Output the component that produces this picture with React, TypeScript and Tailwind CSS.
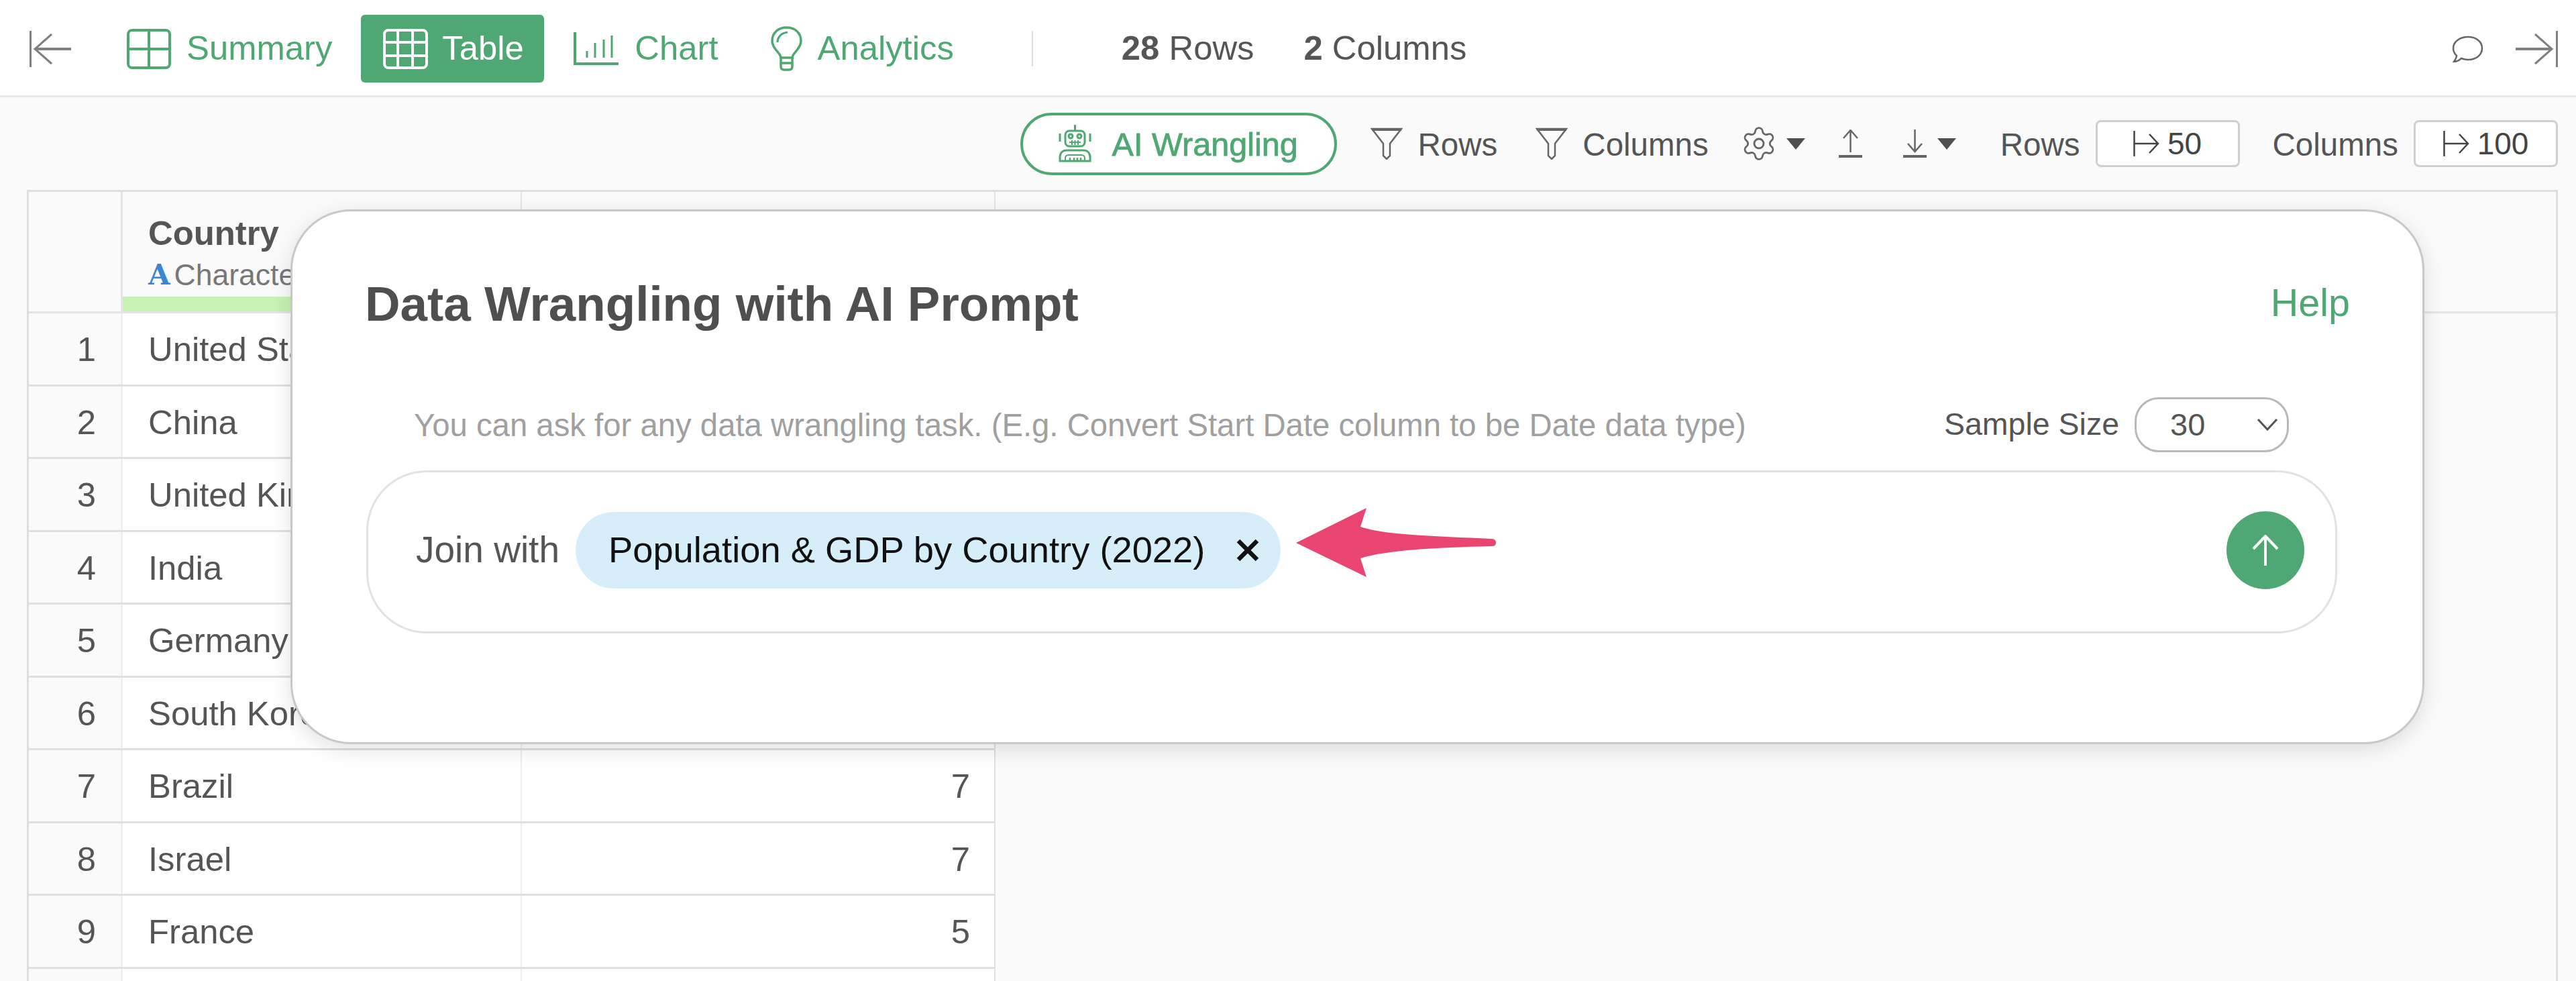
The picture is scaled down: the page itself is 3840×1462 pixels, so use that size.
import { Settings } from "lucide-react";

const ROWS: [string, string][] = [
  ["United States", ""],
  ["China", ""],
  ["United Kingdom", ""],
  ["India", ""],
  ["Germany", ""],
  ["South Korea", ""],
  ["Brazil", "7"],
  ["Israel", "7"],
  ["France", "5"],
  ["", ""],
];

function BackIcon() {
  return (
    <svg width="62" height="54" viewBox="0 0 62 54" fill="none" stroke="#808080">
      <path d="M1.5 0V54" strokeWidth="3" />
      <path d="M62 27H9" strokeWidth="4" />
      <path d="M33 5L8 27L33 49" strokeWidth="3" />
    </svg>
  );
}

function ForwardIcon() {
  return (
    <svg width="63" height="54" viewBox="0 0 63 54" fill="none" stroke="#808080">
      <path d="M61.5 0V54" strokeWidth="3" />
      <path d="M0 27H53" strokeWidth="4" />
      <path d="M29 5L54 27L29 49" strokeWidth="3" />
    </svg>
  );
}

function SummaryIcon() {
  return (
    <svg width="66" height="60" viewBox="0 0 66 60" fill="none" stroke="#4fa873" strokeWidth="4">
      <rect x="2" y="2" width="62" height="56" rx="6" />
      <path d="M33 2V58M2 30H64" />
    </svg>
  );
}

function TableIcon() {
  return (
    <svg width="67" height="60" viewBox="0 0 67 60" fill="none" stroke="#fff" strokeWidth="4">
      <rect x="2" y="2" width="63" height="56" rx="6" />
      <path d="M22 2V58M44 2V58M2 20H65M2 40H65" />
    </svg>
  );
}

function ChartIcon() {
  return (
    <svg width="67" height="50" viewBox="0 0 67 50" fill="none" stroke="#4fa873" strokeWidth="3">
      <path d="M2 0V47H67" strokeWidth="4" />
      <path d="M20 28V38M32 16V38M45 11V38M57 5V38" />
    </svg>
  );
}

function BulbIcon() {
  return (
    <svg width="47" height="67" viewBox="0 0 47 67" fill="none" stroke="#4fa873" strokeWidth="3.5">
      <path d="M15 47C15 40 2 34 2 22C2 10 11 2 23.5 2C36 2 45 10 45 22C45 34 32 40 32 47Z" />
      <path d="M10 24C10 16 16 10 25 9" strokeWidth="3" />
      <path d="M15 47V60Q15 65 20 65H27Q32 65 32 60V47M15 55H32" />
    </svg>
  );
}

function RobotIcon() {
  return (
    <svg width="49" height="56" viewBox="0 0 49 56" fill="none" stroke="#4fa873" strokeWidth="3">
      <path d="M24.5 0V9" />
      <rect x="10" y="9" width="29" height="23" rx="6" />
      <circle cx="18" cy="17" r="3" />
      <circle cx="31" cy="17" r="3" />
      <path d="M16 26H33M20 23V30M24.5 23V30M29 23V30" strokeWidth="2" />
      <path d="M2 13V25M47 13V25" />
      <path d="M2 54V48C2 42 6 38 12 38H37C43 38 47 42 47 48V54Z" />
      <path d="M10 54V50C10 47 12 45 15 45H34C37 45 39 47 39 50V54" strokeWidth="2" />
      <path d="M17 49V53M23 49V53M28 49V53M33 49V53" strokeWidth="2.5" />
    </svg>
  );
}

function FunnelIcon() {
  return (
    <svg width="48" height="48" viewBox="0 0 48 48" fill="none" stroke="#666" strokeWidth="2.5">
      <path d="M2 2H46L29 24V42L24 47L19 42V24Z" />
      <path d="M2 3H46" strokeWidth="4" />
    </svg>
  );
}

function Caret() {
  return (
    <svg width="28" height="17" viewBox="0 0 28 17" fill="#4f4f4f">
      <path d="M0 0H28L14 17Z" />
    </svg>
  );
}

function UploadIcon() {
  return (
    <svg width="35" height="42" viewBox="0 0 35 42" fill="none" stroke="#666" strokeWidth="2.5">
      <path d="M17.5 1V34M7 13L17.5 1L28 13" />
      <path d="M0 40H35" strokeWidth="4" />
    </svg>
  );
}

function DownloadIcon() {
  return (
    <svg width="35" height="42" viewBox="0 0 35 42" fill="none" stroke="#666" strokeWidth="2.5">
      <path d="M17.5 0V33M7 21L17.5 33L28 21" />
      <path d="M0 40H35" strokeWidth="4" />
    </svg>
  );
}

function ChatIcon() {
  return (
    <svg width="47" height="40" viewBox="0 0 47 40" fill="none" stroke="#666" strokeWidth="2.5">
      <path d="M24 2C36 2 45 9 45 19C45 29 36 36 24 36C20 36 17 35 14 34C11 37 7 39 3 39C5 36 7 33 7 30C4 27 2 23 2 19C2 9 12 2 24 2Z" />
    </svg>
  );
}

function LimitArrow() {
  return (
    <svg width="39" height="38" viewBox="0 0 39 38" fill="none" stroke="#444" strokeWidth="2.5">
      <path d="M1.5 0V38M2 19H37M24 5L37 19L24 33" />
    </svg>
  );
}

function LimitBox({ value }: { value: string }) {
  return (
    <div className="flex h-[70px] w-[215px] items-center justify-center gap-[12px] rounded-[8px] border-[3px] border-[#cfcfcf] bg-white text-[46px] text-[#444]">
      <LimitArrow />
      <span>{value}</span>
    </div>
  );
}

export default function App() {
  return (
    <div className="relative h-[1462px] w-[3840px] overflow-hidden bg-[#fafafa] font-['Liberation_Sans',Arial,sans-serif] text-[#555]">
      {/* Top bar */}
      <div className="flex h-[145px] items-center border-b-[3px] border-[#e8e8e8] bg-white pl-[44px] pr-[27px] pt-[3px] text-[50.8px] text-[#4fa873]">
        <BackIcon />
        <div className="ml-[83px] flex items-center gap-[23px]">
          <SummaryIcon />
          <span>Summary</span>
        </div>
        <div className="ml-[43px] flex h-[101px] w-[273px] items-center gap-[21px] rounded-[6px] bg-[#4fa873] pl-[33px] text-white">
          <TableIcon />
          <span>Table</span>
        </div>
        <div className="ml-[44px] flex items-center gap-[24px]">
          <ChartIcon />
          <span>Chart</span>
        </div>
        <div className="ml-[78px] flex items-center gap-[23px]">
          <BulbIcon />
          <span>Analytics</span>
        </div>
        <div className="ml-[116px] h-[53px] w-[2px] bg-[#ddd]" />
        <div className="ml-[132px] text-[#555]">
          <span className="font-bold">28</span> Rows
        </div>
        <div className="ml-[74px] text-[#555]">
          <span className="font-bold">2</span> Columns
        </div>
        <div className="ml-auto">
          <ChatIcon />
        </div>
        <div className="ml-[48px]">
          <ForwardIcon />
        </div>
      </div>

      {/* Toolbar */}
      <div className="flex h-[138px] items-center justify-end pr-[27px] text-[47.5px]">
        <div className="flex h-[93px] w-[472px] items-center gap-[31px] rounded-full border-[4px] border-[#4fa873] bg-white pl-[53px] text-[48.6px] text-[#4fa873] [-webkit-text-stroke:0.8px_#4fa873]">
          <RobotIcon />
          <span className="pt-[3px]">AI Wrangling</span>
        </div>
        <div className="ml-[50px]">
          <FunnelIcon />
        </div>
        <span className="ml-[23px] pt-[4px]">Rows</span>
        <div className="ml-[57px]">
          <FunnelIcon />
        </div>
        <span className="ml-[22px] pt-[4px]">Columns</span>
        <Settings className="ml-[47px] text-[#666]" size={56} strokeWidth={1.2} />
        <div className="ml-[13px]">
          <Caret />
        </div>
        <div className="ml-[50px]">
          <UploadIcon />
        </div>
        <div className="ml-[61px]">
          <DownloadIcon />
        </div>
        <div className="ml-[16px]">
          <Caret />
        </div>
        <span className="ml-[66px] pt-[4px]">Rows</span>
        <div className="ml-[23px]">
          <LimitBox value="50" />
        </div>
        <span className="ml-[49px] pt-[4px]">Columns</span>
        <div className="ml-[23px]">
          <LimitBox value="100" />
        </div>
      </div>

      {/* Table */}
      <div className="ml-[40px] h-[1179px] w-[3773px] border-x-[3px] border-t-[3px] border-[#dedede] text-[50.8px]">
        <div className="flex h-[181px] border-b-[3px] border-[#e4e4e4]">
          <div className="w-[140px] border-r-[3px] border-[#e4e4e4]" />
          <div className="flex w-[595px] flex-col border-r-[2px] border-[#e4e4e4]">
            <div className="pl-[38px] pt-[34px] font-bold leading-[56px]">Country</div>
            <div className="mt-[10px] flex items-center gap-[6px] pl-[38px] text-[44.5px] leading-[48px] text-[#777]">
              <span className="font-['DejaVu_Serif',serif] text-[42px] font-bold text-[#3a86d0]">A</span>
              <span className="whitespace-nowrap">Character</span>
            </div>
            <div className="mt-auto h-[22px] bg-[#c6f2b5]" />
          </div>
          <div className="w-[706px] border-r-[2px] border-[#e4e4e4]" />
        </div>
        <div className="w-[1441px]">
          {ROWS.map(([name, value], i) => (
            <div key={i} className="flex h-[108.5px] border-b-[3px] border-r-[2px] border-[#e0e0e0] bg-white leading-[107px]">
              <div className="w-[140px] border-r-[3px] border-[#efefef] bg-[#fafafa] pr-[37px] text-right">{name ? i + 1 : ""}</div>
              <div className="w-[595px] whitespace-nowrap border-r-[2px] border-[#efefef] pl-[38px]">{name}</div>
              <div className="flex-1 pr-[36px] text-right">{value}</div>
            </div>
          ))}
        </div>
      </div>

      {/* AI prompt dialog */}
      <div className="absolute left-[433px] top-[312px] h-[797px] w-[3181px] rounded-[90px] border-[3px] border-[#c8c8c8] bg-white shadow-[0_8px_30px_rgba(0,0,0,0.12)]">
        <div className="flex items-start justify-between pl-[108px] pr-[108px] pt-[98px]">
          <div className="text-[72.8px] font-bold leading-[80px] text-[#4f4f4f]">Data Wrangling with AI Prompt</div>
          <div className="text-[57.5px] leading-[76px] text-[#4fa873]">Help</div>
        </div>
        <div className="mt-[99px] flex h-[82px] items-center pl-[181px] pr-[199px]">
          <div className="pt-[3px] text-[47.3px] text-[#a0a0a0]">You can ask for any data wrangling task. (E.g. Convert Start Date column to be Date data type)</div>
          <div className="ml-auto text-[46.5px]">Sample Size</div>
          <div className="relative ml-[23px] flex h-[82px] w-[230px] items-center rounded-[36px] border-[3px] border-[#b8b8b8] pl-[50px] text-[47px]">
            30
            <svg className="absolute right-[13px] top-[28px]" width="32" height="20" viewBox="0 0 32 20" fill="none" stroke="#555" strokeWidth="3">
              <path d="M2 2L16 17L30 2" />
            </svg>
          </div>
        </div>
        <div className="ml-[110px] mt-[27px] flex h-[243px] w-[2938px] items-center rounded-[90px] border-[3px] border-[#e2e2e2] pb-[6px] pl-[71px] pr-[46px] text-[54.3px]">
          <span className="text-[55px]">Join with</span>
          <div className="ml-[24px] flex h-[114px] w-[1051px] items-center rounded-full bg-[#d6eefa] pl-[49px] text-[#111]">
            <span className="whitespace-nowrap">Population &amp; GDP by Country (2022)</span>
            <svg className="ml-[46px]" width="36" height="36" viewBox="0 0 36 36" fill="none" stroke="#111" strokeWidth="6.5">
              <path d="M4 4L32 32M32 4L4 32" />
            </svg>
          </div>
          <div className="ml-auto flex h-[116px] w-[116px] items-center justify-center rounded-full bg-[#4fa873]">
            <svg width="40" height="46" viewBox="0 0 40 46" fill="none" stroke="#fff" strokeWidth="4">
              <path d="M20 2V46M2 21L20 2L38 21" />
            </svg>
          </div>
        </div>
      </div>

      {/* Annotation arrow */}
      <svg className="absolute left-[1932px] top-[757px]" width="298" height="103" viewBox="0 0 298 103" fill="#ea4570">
        <path d="M0 52L105 0L96 28C130 40 200 42 292 46Q298 46.5 298 51.5Q298 57 292 57C200 59 130 64 96 75L105 103Z" />
      </svg>
    </div>
  );
}
